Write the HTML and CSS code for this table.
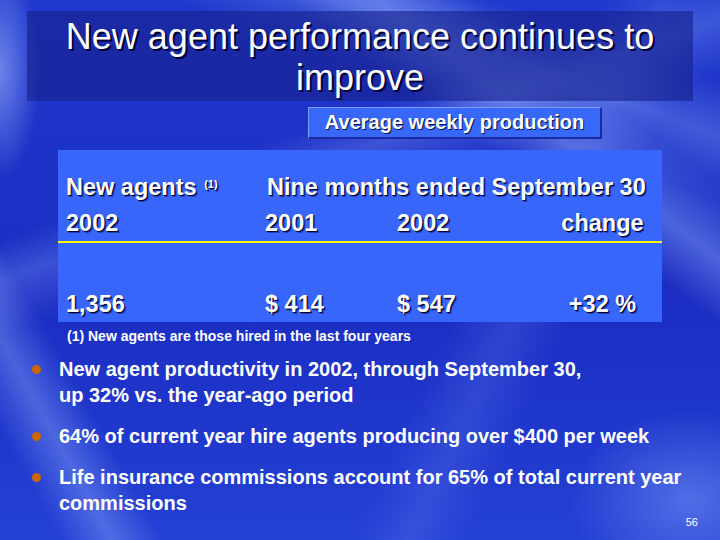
FILE: index.html
```html
<!DOCTYPE html>
<html>
<head>
<meta charset="utf-8">
<link rel="stylesheet" href="styles.css">
</head>
<body>
<div class="slide">
  <div class="title-box">
    <h1 class="title">New agent performance continues to<br>improve</h1>
  </div>
  <div class="subtitle-row">
    <div class="subtitle">Average weekly production</div>
  </div>
  <div class="table-box">
    <div class="thead">
      <div class="cell c1">New agents <sup class="sup">(1)</sup></div>
      <div class="cell span">Nine months ended September 30</div>
      <div class="cell c1">2002</div>
      <div class="cell">2001</div>
      <div class="cell">2002</div>
      <div class="cell center">change</div>
    </div>
    <div class="rule"></div>
    <div class="tbody">
      <div class="cell c1">1,356</div>
      <div class="cell">$ 414</div>
      <div class="cell">$ 547</div>
      <div class="cell center">+32 %</div>
    </div>
  </div>
  <div class="footnote">(1) New agents are those hired in the last four years</div>
  <ul class="bullets">
    <li>New agent productivity in 2002, through September 30,<br>up 32% vs. the year-ago period</li>
    <li>64% of current year hire agents producing over $400 per week</li>
    <li>Life insurance commissions account for 65% of total current year commissions</li>
  </ul>
  <div class="page-num">56</div>
</div>
</body>
</html>
```

FILE: styles.css
```css
html, body {
  margin: 0;
  padding: 0;
}
body {
  font-family: "Liberation Sans", Arial, sans-serif;
  color: #ffffff;
}
.slide {
  width: 720px;
  height: 540px;
  box-sizing: border-box;
  display: flex;
  flex-direction: column;
  overflow: hidden;
  background-color: #1f34cc;
  background-image:
    radial-gradient(ellipse 40px 110px at 0px 70px, rgba(160,185,255,0.6), rgba(160,185,255,0) 100%),
    radial-gradient(ellipse 120px 90px at 690px 500px, rgba(140,170,255,0.45), rgba(140,170,255,0) 100%),
    linear-gradient(61deg, rgba(255,255,255,0) 6%, rgba(150,180,255,0.38) 11%, rgba(255,255,255,0) 16%),
    linear-gradient(37deg, rgba(255,255,255,0) 70%, rgba(150,180,255,0.4) 76%, rgba(255,255,255,0) 83%),
    linear-gradient(160deg, rgba(255,255,255,0) 30%, rgba(140,170,255,0.28) 35%, rgba(255,255,255,0) 42%),
    linear-gradient(200deg, rgba(255,255,255,0) 10%, rgba(150,180,255,0.3) 17%, rgba(255,255,255,0) 25%),
    linear-gradient(115deg, rgba(255,255,255,0) 62%, rgba(120,150,255,0.2) 68%, rgba(255,255,255,0) 74%),
    linear-gradient(180deg, #2038cc 0%, #1b2dc2 55%, #2440d4 100%);
}
.slide > * {
  flex-shrink: 0;
}
.title-box {
  margin: 11px 27px 0 27px;
  height: 90px;
  box-sizing: border-box;
  padding-top: 5px;
  background: rgba(24, 32, 140, 0.62);
}
.title {
  margin: 0;
  font-weight: normal;
  font-size: 36px;
  line-height: 41px;
  text-align: center;
  text-shadow: 2px 2px 0 #000038;
}
.subtitle-row {
  display: flex;
  padding-left: 308px;
  margin-top: 6px;
}
.subtitle {
  width: 294px;
  height: 32px;
  box-sizing: border-box;
  background: #3868fa;
  border-top: 1px solid #7aa0ff;
  border-left: 1px solid #7aa0ff;
  border-right: 2px solid #1a2aa0;
  border-bottom: 2px solid #1a2aa0;
  font-weight: bold;
  font-size: 20px;
  line-height: 29px;
  text-align: center;
  text-shadow: 1px 1px 0 #001040;
}
.table-box {
  margin: 11px 0 0 58px;
  width: 604px;
  height: 172px;
  box-sizing: border-box;
  background: #3866fb;
  padding: 24px 0 0 0;
  font-weight: bold;
  font-size: 23.5px;
  line-height: 26px;
  text-shadow: 1px 1px 0 #000030, 2px 2px 0 rgba(0,0,40,0.4);
}
.thead, .tbody {
  display: grid;
  grid-template-columns: 199px 132px 146px 119px;
  padding-left: 8px;
}
.thead {
  row-gap: 10px;
  grid-auto-rows: 26px;
  padding-bottom: 5px;
}
.rule {
  height: 2px;
  background: #ffff00;
}
.tbody {
  margin-top: 48px;
}
.cell {
  white-space: nowrap;
}
.span {
  grid-column: 2 / 5;
  padding-left: 2px;
}
.center {
  text-align: center;
}
.sup {
  font-size: 11px;
  vertical-align: 7px;
  line-height: 0;
  margin-left: 1px;
}
.footnote {
  margin: 6px 0 0 67px;
  font-weight: bold;
  font-size: 14px;
  line-height: 16px;
}
.bullets {
  list-style: none;
  margin: 12px 0 0 0;
  padding: 0 0 0 59px;
  width: 640px;
  font-weight: bold;
  font-size: 20px;
  line-height: 26px;
}
.bullets li {
  position: relative;
}
.bullets li + li {
  margin-top: 15px;
}
.bullets li::before {
  content: "";
  position: absolute;
  left: -27px;
  top: 9px;
  width: 9px;
  height: 9px;
  border-radius: 50%;
  background: #cc6600;
}
.page-num {
  margin-top: auto;
  margin-bottom: 13px;
  padding-right: 22px;
  text-align: right;
  font-size: 11px;
  line-height: 12px;
}
```
